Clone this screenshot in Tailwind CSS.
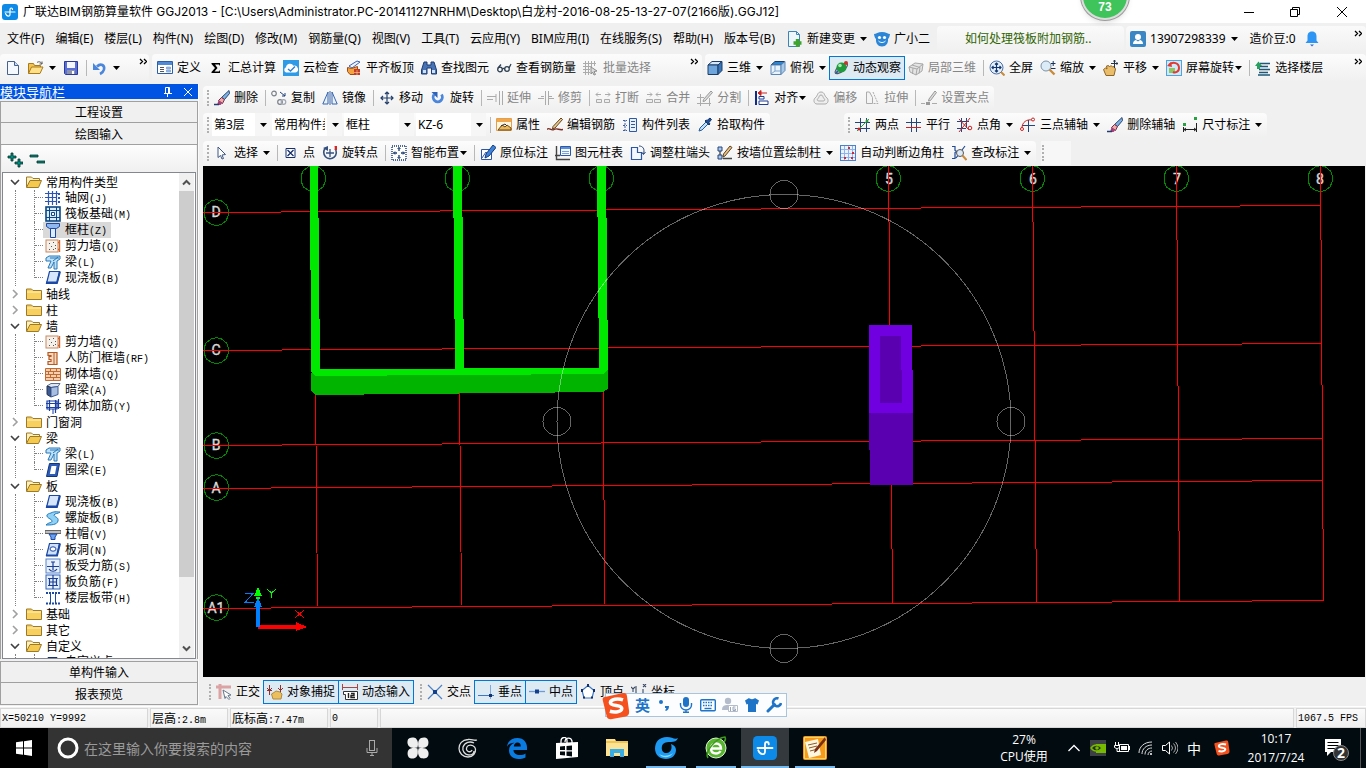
<!DOCTYPE html>
<html lang="zh-CN">
  <head>
    <meta charset="utf-8" />
    <title>广联达BIM钢筋算量软件 GGJ2013</title>
    <script src="https://cdn.jsdelivr.net/npm/@tailwindcss/browser@4"></script>
  </head>
  <body
    class="h-screen flex flex-col overflow-hidden bg-[#f0f0f0] font-['Noto_Sans','Noto_Sans_CJK_SC',sans-serif] text-xs leading-4 text-black whitespace-nowrap"
  >
    <!-- icon sprite, every symbol on a 16x16 grid -->
    <svg class="hidden">
      <symbol id="app" viewBox="0 0 16 16"><rect width="16" height="16" rx="3" fill="#0d8ae8"/><path d="M10.500 5.500C10.500 3.500 8 3.500 8 5.500V10.500C8 13 4.500 12.500 3.500 9.500M3 8H13" fill="none" stroke="#fff" stroke-width="1.200" stroke-linecap="round"/></symbol>
      <symbol id="new" viewBox="0 0 16 16"><path d="M2.500 1.500h7l4 4v9h-11z" fill="#f4f9ff" stroke="#46618c"/><path d="M9.500 1.500v4h4" fill="#c8daf2" stroke="#46618c"/></symbol>
      <symbol id="open" viewBox="0 0 16 16"><path d="M.5 13.500v-10h5l1 2h6v2" fill="#f3c350" stroke="#a97a1a"/><path d="M.5 13.500l3-6.500H15l-3 6.500z" fill="#ffe08a" stroke="#a97a1a"/><path d="M9 2.500c2-1.500 4-.5 5 1.500m0-2.500V4h-2.500" fill="none" stroke="#555"/></symbol>
      <symbol id="save" viewBox="0 0 16 16"><path d="M1.500 1.500h13v13h-12l-1-1z" fill="#5a6fd8" stroke="#2b3a9a"/><path d="M4 2h8v6H4z" fill="#f5f7ff"/><path d="M4 10h8v4H4z" fill="#8d93a8"/><path d="M9 11h2v3H9z" fill="#fff"/></symbol>
      <symbol id="undo" viewBox="0 0 16 16"><path d="M5 6.500c4-4 8-1 7 3-.5 2-2 3.500-4 4.500" fill="none" stroke="#4a86dc" stroke-width="2.600"/><path d="M1 3v7h7z" fill="#4a86dc"/></symbol>
      <symbol id="define" viewBox="0 0 16 16"><path d="M.5 1.500h15v12H.5z" fill="#fff" stroke="#2d5fa8"/><path d="M1 2h14v3H1z" fill="#4f8ad6"/><path d="M3 7.500h4M3 9.500h4M3 11.500h4" stroke="#555"/><path d="M9.500 7h4v2h-4zm0 3h4v2h-4z" fill="#9fbfe8" stroke="#5a86be" stroke-width=".5"/></symbol>
      <symbol id="sigma" viewBox="0 0 16 16"><path d="M3.500 3h8.500v3l-1-1.500H7L9.500 8 6.500 11.500H11l1-1.500v3H3.500v-1L7 8 3.500 4z" fill="#000"/></symbol>
      <symbol id="cloud" viewBox="0 0 16 16"><rect width="16" height="16" fill="#2f9be6"/><path d="M3 12.500a2.800 2.800 0 0 1 0-5.200 4 4 0 0 1 7.500-1.500 3.400 3.400 0 0 1 2 6.700z" fill="#fff"/><path d="M5 9l2.500 2L12 6.500" fill="none" stroke="#2f7fd0" stroke-width="1.400"/></symbol>
      <symbol id="flush" viewBox="0 0 16 16"><path d="M3 6l8-5 3 1-8 6z" fill="#eef3ff" stroke="#3d62b0"/><path d="M1.500 7.500l4 1 6-2v3l-3 1 3 .5v3.500H4l-2.500-3z" fill="#f5a340" stroke="#9c4b16"/><path d="M8 9h6v6H8z" fill="#c43c26"/><path d="M8 12.500h6M11 10v5" stroke="#ffd9a0" stroke-width=".6"/></symbol>
      <symbol id="binoc" viewBox="0 0 16 16"><path d="M3 2h3v3h4V2h3l2.500 8v4h-5V8H6v6H.500v-4z" fill="#4773b4" stroke="#1d3c73"/><path d="M2 10h3v3H2zm9 0h3v3h-3z" fill="#cfe0f7"/></symbol>
      <symbol id="glasses" viewBox="0 0 16 16"><g fill="none" stroke="#2c3e50" stroke-width="1.300"><circle cx="4" cy="9.500" r="2.300"/><circle cx="11" cy="9" r="2.300"/><path d="M6.300 9.500c.6-1.500 1.500-1.500 2.500-.5M2 8l3-3.500M13 8l2-4"/></g></symbol>
      <symbol id="batch" viewBox="0 0 16 16"><path d="M0 3.500h13M0 6.500h9M0 9.500h7M0 12.500h7M2.500 1v14M5.500 1v14M8.500 1v6M11.500 1v5" stroke="#ababab"/><path d="M8 7l6 4-3 .5 1.500 3-1.500.5-1.500-3L8 14z" fill="#ddd" stroke="#8c8c8c"/></symbol>
      <symbol id="cube" viewBox="0 0 16 16"><path d="M1 5l4-3.500h10L11 5z" fill="#d5e8fa" stroke="#1b3c68"/><path d="M1 5h10v9.500H1z" fill="#6ea5dc" stroke="#1b3c68"/><path d="M11 5l4-3.500v9l-4 4z" fill="#3a75b8" stroke="#1b3c68"/></symbol>
      <symbol id="topcube" viewBox="0 0 16 16"><path d="M1 5l4-3.500h10L11 5z" fill="#2e86d1" stroke="#1b3c68"/><path d="M1 5h10v9.500H1z" fill="#e8f3fc" stroke="#5c86b4"/><path d="M11 5l4-3.500v9l-4 4z" fill="#a9c9e8" stroke="#5c86b4"/><path d="M5 11v-6M5 11h6M5 11l-4 3" stroke="#7ea4cc"/></symbol>
      <symbol id="orbit" viewBox="0 0 16 16"><ellipse cx="8" cy="8.500" rx="7.500" ry="3" transform="rotate(-38 8 8)" fill="none" stroke="#4e5a66" stroke-width="1.200"/><circle cx="8.500" cy="7.500" r="5" fill="#1f9a3c"/><circle cx="7" cy="5.500" r="1.800" fill="#a8edb0"/><path d="M2 14l2-4 2 2z" fill="#245d9c"/><circle cx="13" cy="3" r="2" fill="#c8342c"/></symbol>
      <symbol id="local" viewBox="0 0 16 16"><path d="M1 7l6-4 8 1-1 7-6 4-6-3z" fill="#e4e4e4" stroke="#a8a8a8"/><path d="M1 7l8 2 6-5M9 9l-1 6M4 5l8 2.500-1 6M5 8l-.500 6" fill="none" stroke="#a8a8a8"/></symbol>
      <symbol id="full" viewBox="0 0 16 16"><circle cx="7.500" cy="7.500" r="6.500" fill="#e4f0fb" stroke="#4d6fa3"/><path d="M12 12l3.500 3.500" stroke="#c98b3a" stroke-width="2"/><path d="M7.500 3v9M3 7.500h9M6 4.500L7.500 3 9 4.500M6 10.500L7.500 12 9 10.500M4.500 6L3 7.500 4.500 9M10.500 6L12 7.500 10.500 9" fill="none" stroke="#14366e" stroke-width="1.200"/></symbol>
      <symbol id="zoom" viewBox="0 0 16 16"><circle cx="6" cy="6" r="5" fill="#dcebf8" stroke="#7c92a8"/><path d="M9.500 9.500l5 5" stroke="#c98b3a" stroke-width="2.400"/><path d="M11 3.500h4.500M13.200 1v5M11 8.500h4.500" stroke="#16325c"/></symbol>
      <symbol id="pan" viewBox="0 0 16 16"><path d="M3 15.500L.5 9.500l2-1.500 1.500 1-.5-3 2-.5 1 1.500 1.500-1.500 1.500 1.500 1.500-.5 1.500 2.500-1.500 6.500z" fill="#e9bd6a" stroke="#8d6526"/><path d="M11.500 0v8M8 3.500h7M10.500 1.500l1-1.500 1 1.500M13.500 2.500l1.500 1-1.500 1" fill="none" stroke="#26344a"/></symbol>
      <symbol id="screen" viewBox="0 0 16 16"><rect x=".5" y=".5" width="15" height="15" fill="#cfe9fa" stroke="#50a4da"/><path d="M3 8h6v5H3z" fill="#8cc665"/><path d="M3 5c4-4 10-2 10 3 0 4-4 5-6 4" fill="none" stroke="#e23a30" stroke-width="2"/><path d="M1 6l4-4 1 5z" fill="#e23a30"/></symbol>
      <symbol id="floors" viewBox="0 0 16 16"><path d="M5 3.500h10M4 6.500h9M4 9.500h11M4 12.500h9M3 15h12" stroke="#1e5a78" stroke-width="1.500"/><path d="M0 6l3.500-4.500L7 6H5v3H2V6z" fill="#27a060"/></symbol>
      <symbol id="brush" viewBox="0 0 16 16"><path d="M15 0.500l.5 3-5 6-3-2z" fill="#7db0e4" stroke="#2e4a70"/><path d="M7.500 7.500l3 2-2 4-4-3z" fill="#f7a8a8" stroke="#6e2f4c"/><path d="M4.500 10.500l3.500 3-1.500 1.500H3z" fill="#a63c78"/><path d="M0 14.500h5" stroke="#223c70" stroke-width="1.500"/></symbol>
      <symbol id="copy" viewBox="0 0 16 16"><g fill="none" stroke="#7c828c" stroke-width="1.200"><circle cx="3" cy="3.500" r="2.300"/><circle cx="9" cy="12" r="2.300"/><circle cx="12.500" cy="12" r="2.300" stroke="#a0a8b4"/></g><path d="M9 2l5 4M14 3v3h-3" fill="none" stroke="#1e3f7c"/></symbol>
      <symbol id="mirror" viewBox="0 0 16 16"><path d="M6 2v12H.800zM10 2v12h5.200z" fill="#e9f1fb" stroke="#3765ad"/><path d="M8 1v14" stroke="#3765ad"/></symbol>
      <symbol id="move" viewBox="0 0 16 16"><path d="M8 2v12M2 8h12M6 4L8 2l2 2M6 12l2 2 2-2M4 6L2 8l2 2M12 6l2 2-2 2" fill="none" stroke="#22406b" stroke-width="1.200"/></symbol>
      <symbol id="rotate" viewBox="0 0 16 16"><path d="M4 4.500a4.600 4.600 0 1 0 7.500 0" fill="none" stroke="#4a86dc" stroke-width="2.800"/><path d="M1.500 2h6v6z" fill="#2e62b8"/></symbol>
      <symbol id="extend" viewBox="0 0 16 16"><path d="M0 6.500h9M0 9.500h6M12.500 1v14M15.500 1v14M9 4v8" stroke="#ababab"/></symbol>
      <symbol id="trim" viewBox="0 0 16 16"><path d="M0 8.500h6M11 8.500h5M7.500 1v14M10.500 1v14M3 6.500h3M11 6.500h3" stroke="#ababab"/></symbol>
      <symbol id="break" viewBox="0 0 16 16"><path d="M1 4.500h5M10 4.500h5M3 2.500l-2 2 2 2M13 2.500l2 2-2 2" fill="none" stroke="#ababab"/><path d="M1.500 9.500h5v3h-5zM9.500 9.500h5v3h-5z" fill="#eee" stroke="#ababab"/></symbol>
      <symbol id="merge" viewBox="0 0 16 16"><path d="M1 4.500h5M10 4.500h5M4 2.500l2 2-2 2M12 2.500l-2 2 2 2" fill="none" stroke="#ababab"/><path d="M.5 9.500h6v3h-6zM8.500 9.500h6v3h-6z" fill="#eee" stroke="#ababab"/></symbol>
      <symbol id="split" viewBox="0 0 16 16"><path d="M0 7.500h7M0 13.500h14M3.500 4v12M12.500 8v8" stroke="#ababab"/><path d="M14 1l1.500 1.500L8 11l-2 .5.500-2z" fill="#ddd" stroke="#999"/></symbol>
      <symbol id="align" viewBox="0 0 16 16"><path d="M2 1v14" stroke="#102c88" stroke-width="2"/><path d="M5 6.500h5v2.500H5zM5 11h9v3.500H5z" fill="#fff" stroke="#1f3c94"/><path d="M6 3h7M4 3l3-2.500v5z" stroke="#c22" fill="#c22"/></symbol>
      <symbol id="offset" viewBox="0 0 16 16"><path d="M8 2c4 0 3 4 6 6 2 2 1 6-2 6H4c-3 0-4-4-2-6 3-2 2-6 6-6z" fill="#eee" stroke="#ababab"/><path d="M8 5c2 0 1.500 2 3 3.500s.5 2.500-1 2.500H6c-1.500 0-2.500-1-1-2.500S6 5 8 5z" fill="none" stroke="#ababab"/></symbol>
      <symbol id="stretch" viewBox="0 0 16 16"><path d="M2.500 2v11.500h6v-6l-3-5.500z" fill="#f4f4f4" stroke="#ababab"/><path d="M9 2l5 11.500H9" fill="none" stroke="#ababab" stroke-dasharray="2 1"/></symbol>
      <symbol id="grips" viewBox="0 0 16 16"><path d="M0 13.500h4M11 13.500h5" stroke="#ababab"/><path d="M5 12h4v3H5z" fill="#999"/><path d="M14 1l1.500 1.500-6 8-2 .500.500-2z" fill="#ddd" stroke="#999"/></symbol>
      <symbol id="prop" viewBox="0 0 16 16"><path d="M.5 1.500h15v12H.5z" fill="#fff6e0" stroke="#e0a050"/><path d="M1 2h14v3H1z" fill="#f0a64a"/><path d="M2 13l4-5 3 2 2-2 4 3v2z" fill="#e7b95b" stroke="#704814"/><path d="M5 9l4-2 2 2" stroke="#333" fill="none"/></symbol>
      <symbol id="editbar" viewBox="0 0 16 16"><path d="M0 12.500c2-3 4 2 7 0s5 1 9 0" fill="none" stroke="#7a2a20" stroke-width="1.400"/><path d="M14 1l1.500 1.500L8 11l-2.500 1L6 9.500z" fill="#ecc88a" stroke="#5c4322"/></symbol>
      <symbol id="list" viewBox="0 0 16 16"><path d="M1 3.500h4M1 8.500h4M1 13.500h4M3 3v11" stroke="#3b5fa0" stroke-dasharray="2 1"/><path d="M7.500 1.500h7v13h-7z" fill="#e9f1fc" stroke="#2f58a3"/><path d="M9 4.500h4M9 7.500h4M9 10.500h4" stroke="#2f58a3"/></symbol>
      <symbol id="pick" viewBox="0 0 16 16"><path d="M2 14l1-3 6-6 2 2-6 6z" fill="#bfe0fa" stroke="#2a5c98"/><path d="M8 4l4 4 1-1-1-1.500 2.500-3L13 1l-3 2.500L9 3z" fill="#1f4f96" stroke="#16376c"/></symbol>
      <symbol id="twopt" viewBox="0 0 16 16"><path d="M0 5.500h15M0 11.500h15M5.500 1v14M11.500 1v14" stroke="#26467a"/><path d="M2 14L14 2" stroke="#2d9c3a"/><circle cx="4" cy="12" r="1.500" fill="#c22"/><circle cx="12" cy="4" r="1.500" fill="#2d9c3a"/></symbol>
      <symbol id="parallel" viewBox="0 0 16 16"><path d="M0 5.500h15M5.500 1v14M10.500 1v14" stroke="#26467a"/><path d="M0 10.500h15" stroke="#c22"/></symbol>
      <symbol id="ptangle" viewBox="0 0 16 16"><path d="M0 4.500h12M0 11.500h9M4.500 1v14M9.500 1v10" stroke="#26467a"/><path d="M2 15L13 1M2 2l10 11" stroke="#c22"/><circle cx="13" cy="11" r="1.800" fill="#fff" stroke="#c22"/></symbol>
      <symbol id="threept" viewBox="0 0 16 16"><path d="M2 8.500h13M8.500 3v12" stroke="#26467a"/><path d="M2 11c0-6 5-9 10-8" fill="none" stroke="#c22"/><circle cx="2" cy="12" r="1.500" fill="#fff" stroke="#c22"/><circle cx="13" cy="2.500" r="1.500" fill="#fff" stroke="#c22"/></symbol>
      <symbol id="dim" viewBox="0 0 16 16"><path d="M1 6h3v3H1zM12 0h3v3h-3z" fill="#27a243"/><path d="M1.500 10v5M14.500 6v9M2 12.500h12M4 11l-2 1.500L4 14M12 11l2 1.500-2 1.500" fill="none" stroke="#222"/></symbol>
      <symbol id="cursor" viewBox="0 0 16 16"><path d="M4 2l7.500 7.500-3.500.5 1.500 3.500-1.500.5-1.500-3.500L4 12.500z" fill="#fff" stroke="#3e5680"/></symbol>
      <symbol id="point" viewBox="0 0 16 16"><path d="M3 3.500h9v9H3z" fill="#fff" stroke="#17306c"/><path d="M4.500 5l6 6M10.500 5l-6 6" stroke="#17306c" stroke-width="1.300"/></symbol>
      <symbol id="rotpt" viewBox="0 0 16 16"><path d="M3.500 3a6.300 6.300 0 1 0 9.500.5" fill="none" stroke="#34507e" stroke-width="1.600"/><path d="M8 4v8M4 8h8" stroke="#34507e" stroke-width="1.300"/><path d="M1 3l5-2v5z" fill="#34507e"/><path d="M12.500 1h2.500v4h-2z" fill="#d22"/></symbol>
      <symbol id="smart" viewBox="0 0 16 16"><rect x="1" y="1" width="14" height="14" fill="#fff" stroke="#16386c" stroke-width="1.400" stroke-dasharray="1 1"/><path d="M8 2.500V6M8 10v3.500M2.500 8H6M10 8h3.500" stroke="#16386c" stroke-width="1.300"/><path d="M6.500 4L8 2.500 9.500 4M6.500 12L8 13.500 9.500 12M4 6.500L2.500 8 4 9.500M12 6.500L13.500 8 12 9.500" fill="none" stroke="#16386c"/></symbol>
      <symbol id="insitu" viewBox="0 0 16 16"><path d="M1.500 4.500h10v10h-10z" fill="#fff" stroke="#2c57a5"/><path d="M2 13l4-6 2 3" stroke="#2c57a5" fill="none"/><path d="M13 0l3 2.500-7 8.500-4 2 1-4z" fill="#3e83d8" stroke="#153a7c"/></symbol>
      <symbol id="table" viewBox="0 0 16 16"><path d="M5.500 1.500h10v9h-10z" fill="#f3f8ff" stroke="#2c57a5"/><path d="M6 2h9v2H6z" fill="#5a8ed8"/><path d="M7 6.500h7M7 8.500h7" stroke="#7aa0d8"/><path d="M1.500 1v13.500H15M0 10.500h5" fill="none" stroke="#444" stroke-width="1.400"/></symbol>
      <symbol id="adjust" viewBox="0 0 16 16"><path d="M1.500 14.500v-12h6v5h4v7z" fill="#f3f8ff" stroke="#2c57a5" stroke-width="1.200"/><path d="M9 1c4 0 6 3 4.500 8M11.500 7l2 2.500L15.500 7" fill="none" stroke="#26467a"/></symbol>
      <symbol id="wallcol" viewBox="0 0 16 16"><path d="M1 2h4v4H1zM1 10h4v4H1z" fill="#a9c6ee" stroke="#26467a"/><path d="M6 13.500h9M3 6v4" stroke="#444" stroke-width="1.300"/><path d="M13 1l2 1.500-7 8.500-2 1 .500-3z" fill="#e9c184" stroke="#5c4322"/></symbol>
      <symbol id="autocol" viewBox="0 0 16 16"><rect x=".5" y=".5" width="15" height="15" fill="#eaf3ff" stroke="#4c80c8"/><path d="M1 4.500h14M1 8.500h14M1 12.500h14M4.500 1v14M8.500 1v14M12.500 1v14" stroke="#8fb4e8"/><path d="M8 2h2v2H8zM4 12h2v2H4zM11 12h2v2h-2zM12 7h2v2h-2z" fill="#d22a2a"/></symbol>
      <symbol id="check" viewBox="0 0 16 16"><path d="M1 1.500h3v4l2 1-2 1v6H1M14 1L5 13" fill="none" stroke="#204a94" stroke-width="1.200"/><circle cx="9" cy="8" r="3.500" fill="#dce9f6" stroke="#555"/><path d="M11.500 10.500l4 4.500" stroke="#c98b3a" stroke-width="2"/></symbol>
      <symbol id="ortho" viewBox="0 0 16 16"><path d="M0 3h15M4 0v15" stroke="#dba3a3" stroke-width="3"/><path d="M7 6l8 5-3 .500 2 3-1 1-3-3-1 2z" fill="#fff" stroke="#66788a"/></symbol>
      <symbol id="osnap" viewBox="0 0 16 16"><path d="M2.500 1v10M13.500 1v8M0 6.500h5M0 4l2.500 2.500L5 4M11 4l2.500 2.500L16 4" fill="none" stroke="#8c3030"/><path d="M6 15l-1.500-5L7 8.500 9 7l4 1 2 2-1 5z" fill="#ecbf5c" stroke="#b08a3e"/></symbol>
      <symbol id="dyn" viewBox="0 0 16 16"><path d="M.5 0v6M15.500 0v6M1 3.500h14" stroke="#a04848"/><path d="M1.500 7.500h14v8h-12v-5h-2z" fill="#fff" stroke="#333"/><path d="M6.500 9v5M9 9.500h3v2H9v2h4" fill="none" stroke="#222" stroke-width="1.400"/></symbol>
      <symbol id="cross" viewBox="0 0 16 16"><path d="M1 1l14 14M15 1L1 15" stroke="#4b82c8" stroke-width="1.200"/><path d="M6 6h4v4H6z" fill="#12408c"/></symbol>
      <symbol id="perp" viewBox="0 0 16 16"><path d="M0 11.500h16" stroke="#3c78c4"/><path d="M12.500 1v14" stroke="#7da9dc"/><path d="M11 10h3v3h-3z" fill="#12306c"/></symbol>
      <symbol id="mid" viewBox="0 0 16 16"><path d="M0 7.500h16" stroke="#6b9bd8" stroke-width="1.300"/><path d="M6 5.500h4v4H6z" fill="#12408c"/></symbol>
      <symbol id="vertex" viewBox="0 0 16 16"><path d="M8 1.500l6 5-2 7.500H4L2 6.500z" fill="#fff" stroke="#3c78c4" stroke-width="1.200"/><path d="M7 0h2v3H7zM13 5h2v3h-2zM1 5h2v3H1zM3 12.500h2v2H3zM11 12.500h2v2h-2z" fill="#12306c"/></symbol>
      <symbol id="coord" viewBox="0 0 16 16"><path d="M0 3l2 2 2-2M2 5v3M12 0l3 3M15 0l-3 3M5 2v9l7 3V5M5 11l-3 3" fill="none" stroke="#3a4c66" stroke-width="1.100"/></symbol>
      <symbol id="change" viewBox="0 0 16 16"><path d="M1.500.5h8l3 3v12h-11z" fill="#eef6fd" stroke="#3c84b8"/><path d="M9.500.5v3h3" fill="none" stroke="#3c84b8"/><path d="M10.500 8v8M6.500 12h8" stroke="#3da52c" stroke-width="3.400"/></symbol>
      <symbol id="mascot" viewBox="0 0 16 16"><path d="M8 1c4 0 6 2 8 2-.5 3-1 4-2 5 .5 4-2 7.500-6 7.500S1.500 12 2 8C1 7 .5 6 0 3c2 0 4-2 8-2z" fill="#2b86d8"/><circle cx="5.500" cy="6.500" r="1.600" fill="#fff"/><circle cx="10.500" cy="6.500" r="1.600" fill="#fff"/><path d="M4.500 10c2 2 5 2 7 0" fill="none" stroke="#fff"/></symbol>
      <symbol id="user" viewBox="0 0 16 16"><rect width="16" height="16" rx="2" fill="#3b87c4"/><circle cx="8" cy="6" r="3" fill="#fff"/><path d="M3 13c0-3 2-4 3-4l2 1.500L10 9c1 0 3 1 3 4z" fill="#fff"/></symbol>
      <symbol id="bell" viewBox="0 0 16 16"><path d="M8 .5c3.500 0 4.500 2.500 4.500 5v4l2 2.500h-13l2-2.500v-4c0-2.500 1-5 4.500-5z" fill="#2d96f5"/><path d="M6 13.500h4L8 15.500z" fill="#2d6fd0"/></symbol>
      <!-- tree icons -->
      <symbol id="fopen" viewBox="0 0 16 16"><path d="M.5 13V3h5l1.500 1.500h6.500V7" fill="#fdf0bd" stroke="#9c7a2c"/><path d="M.5 13.500L4 6.500h11.500l-3 7z" fill="#f5c84e" stroke="#9c7a2c"/></symbol>
      <symbol id="fclosed" viewBox="0 0 16 16"><path d="M.5 13.500V3h5L7 4.500h8.500v9z" fill="#f7d060" stroke="#9c7a2c"/><path d="M1 6h14" stroke="#fff2bf"/></symbol>
      <symbol id="axis" viewBox="0 0 16 16"><path d="M0 3.500h15M0 7.500h12M0 11.500h12M3.500 1v14M7.500 1v14M11.500 1v14" stroke="#2c56b4" stroke-width="1.200"/><path d="M13 3h2v2h-2zM13 7h2v2h-2zM13 11h2v2h-2z" fill="#2c56b4"/></symbol>
      <symbol id="raft" viewBox="0 0 16 16"><rect x="1" y="1" width="14" height="14" fill="#d7ecff" stroke="#0d4880" stroke-width="1.600"/><path d="M4.500 1v14M11.500 1v14M1 4.500h14M1 11.500h14" stroke="#0d4880"/><path d="M6.500 6.500h3v3h-3z" fill="#fff" stroke="#0d4880"/></symbol>
      <symbol id="column" viewBox="0 0 16 16"><path d="M1.500 1.500h13v3l-3 2h-7l-3-2z" fill="#8fb8f0" stroke="#1b49a4"/><path d="M5.500 6.500h5v9h-5z" fill="#dfecff" stroke="#1b49a4"/></symbol>
      <symbol id="shear" viewBox="0 0 16 16"><rect x="1" y="2" width="12" height="12" fill="#f5f0ea" stroke="#c98a60"/><path d="M4 5h1v1H4zM8 4h1v1H8zM6 8h1v1H6zM10 7h1v1h-1zM4 11h1v1H4zM8 11h1v1H8zM10 10h1v1h-1z" fill="#555"/><path d="M14.500 2v12M13 4.500h2M13 11.500h2" stroke="#d0662c" stroke-width="1.400"/></symbol>
      <symbol id="beam" viewBox="0 0 16 16"><path d="M1 4l3-2h11v3l-3 2v8H9V8l-3 6H3l3-7H1z" fill="#bfe0fa" stroke="#2678b8"/><path d="M5 4l9 0M8 7l5-4" stroke="#2678b8"/></symbol>
      <symbol id="slab" viewBox="0 0 16 16"><path d="M4.500 1.500h10l-2.500 12H1.500z" fill="#d6e6fd" stroke="#1b49a4" stroke-width="1.200"/><path d="M1 12.500h11l3-11" fill="none" stroke="#1b49a4" stroke-width="2"/></symbol>
      <symbol id="door" viewBox="0 0 16 16"><path d="M3 2.500h9v12H3v-3h3v-2H4v-3h2v-1H3z" fill="#f9d9c0" stroke="#b55a24" stroke-width="1.200"/><path d="M9 3v11" stroke="#b55a24"/></symbol>
      <symbol id="brick" viewBox="0 0 16 16"><path d="M.5 2.500h15v12H.5z" fill="#f7cfae" stroke="#c06a34"/><path d="M1 5.500h14M1 8.500h14M1 11.500h14M5.500 3v3M11.500 3v3M8.500 6v3M3.500 6v3M5.500 9v3M11.500 9v3M8.500 12v3" stroke="#c06a34"/></symbol>
      <symbol id="hbeam" viewBox="0 0 16 16"><path d="M2 4l4-2.500h9L13 4.500l-7 1z" fill="#dfe7f2" stroke="#5a6b88"/><path d="M2 4l4 1.500V15l-4-2.500z" fill="#3c5a94" stroke="#23334f"/><path d="M6 5.500l7-1v8L6 15z" fill="#a9bfe2" stroke="#3c5a94"/></symbol>
      <symbol id="masonry" viewBox="0 0 16 16"><path d="M1 5.500h15M1 9.500h15M4.500 2v11M10.500 2v13M13.500 1v10M2 3h10v8H2z" fill="none" stroke="#1b3fa4" stroke-width="1.200"/><path d="M8 11v5" stroke="#1b3fa4"/></symbol>
      <symbol id="ring" viewBox="0 0 16 16"><path d="M4.500 1.500h10l-2.500 13H1.500z" fill="#2c5cb8" stroke="#12357c"/><path d="M6.500 4h5l-1.500 8H4.800z" fill="#fff"/></symbol>
      <symbol id="spiral" viewBox="0 0 16 16"><path d="M6 3c3-2 8-1 9-1-2 2-5 1-6 3 0 2 5 2 4 6-1 4-7 4-12 4 3-3 6-2 6-4S1 8 2 5c.5-1 2-1.500 4-2z" fill="#8fd0f5" stroke="#1f7abd"/></symbol>
      <symbol id="cap" viewBox="0 0 16 16"><path d="M0 4.500h16v3H0z" fill="#bdbdbd" stroke="#666"/><path d="M4 8h8l-2 3v2.500H6V11z" fill="#6aa2f0" stroke="#1b49a4"/></symbol>
      <symbol id="hole" viewBox="0 0 16 16"><path d="M4.500 1.500h10l-2.500 12H1.500z" fill="#cfe2fb" stroke="#1b49a4" stroke-width="1.200"/><ellipse cx="8" cy="7" rx="3" ry="2.200" fill="#fff" stroke="#1b49a4"/><path d="M1 13.500h11l3-12" fill="none" stroke="#1b49a4" stroke-width="2"/></symbol>
      <symbol id="rebar" viewBox="0 0 16 16"><rect x="1" y="1" width="14" height="14" fill="#e6effd" stroke="#5b85c8"/><path d="M2 8.500h12M8 4v8M6 4h4M4 11c2 3 6 3 8 0" fill="none" stroke="#1b3f94" stroke-width="1.200"/></symbol>
      <symbol id="neg" viewBox="0 0 16 16"><rect x="1" y="1" width="14" height="14" fill="#e6effd" stroke="#2f62b8"/><path d="M3 4.500h10M3 11.500h10M4 8h8M4.500 4v8M11.500 4v8M8 1v14" stroke="#1b3f94" stroke-width="1.200"/></symbol>
      <symbol id="strip" viewBox="0 0 16 16"><path d="M1 3h14M1 13.500h14" stroke="#1b49a4" stroke-width="2" stroke-dasharray="2 1"/><path d="M5.500 4v9M10.500 4v9" stroke="#1b49a4"/></symbol>
      <symbol id="sogou" viewBox="0 0 16 16"><path d="M1 3l11-2.500c2 0 2 .500 2.300 2L15.500 11c0 2-.5 2.500-2 3L5 15.500c-1.500 0-2-.5-2.400-2L.500 5C.300 4 .3 3.300 1 3z" fill="#f4511e"/><path d="M12 4.500C9 3.500 5 4 4.800 6c0 2.500 6.700 1 6.500 3.500-.2 2-4 2.300-6.800 1.500" fill="none" stroke="#fff" stroke-width="2"/></symbol>
      <!-- axis bubble -->
      <symbol id="bubble" viewBox="0 0 27 27"><path d="M13.500.5l5 1.500 5 4 2 5v5l-2.500 6-5 3.500-4.500 1-5-1-5-3.500-2.500-6v-5l2-5 5-4z" fill="none" stroke="#008a00"/></symbol>
    </svg>

    <header class="relative flex h-[23px] shrink-0 items-center bg-white">
      <svg class="ml-0.5 size-4"><use href="#app" /></svg>
      <h1 class="ml-[5px] font-['Inter','Noto_Sans_CJK_SC',sans-serif]">广联达BIM钢筋算量软件 GGJ2013 - [C:\Users\Administrator.PC-20141127NRHM\Desktop\白龙村-2016-08-25-13-27-07(2166版).GGJ12]</h1>
      <div class="ml-auto flex h-full">
        <button aria-label="最小化" class="flex w-[46px] items-center justify-center"><svg class="size-3" fill="none" stroke="#000"><path d="M1 6.500h10" /></svg></button>
        <button aria-label="还原" class="flex w-[46px] items-center justify-center"><svg class="size-3" fill="none" stroke="#000"><path d="M1.500 3.500h7v7h-7zM3.500 3.500v-2h7v7h-2" /></svg></button>
        <button aria-label="关闭" class="flex w-12 items-center justify-center"><svg class="size-3" fill="none" stroke="#000"><path d="M1 1l10 10M11 1L1 11" /></svg></button>
      </div>
      <div class="absolute right-[237px] -top-7 z-10 flex size-12 items-end justify-center rounded-full border-2 border-[#dcdcdc] bg-[#3fc45c] pb-[3px] shadow-md ring-1 ring-[#9a9a9a]">
        <span class="font-['Liberation_Sans'] text-xs font-bold text-white">73</span>
      </div>
    </header>

    <div class="flex h-[31px] shrink-0 items-center">
      <nav id="menu" class="flex gap-[11px] pl-[7px]"></nav>
      <div data-bar="change" class="ml-3"></div>
      <div class="ml-[7px] flex h-[26px] w-[187px] items-center rounded-sm bg-linear-to-b from-[#fafafa] to-[#f0f0f0] pl-7">
        <a href="#" class="text-[#2f6400]">如何处理筏板附加钢筋..</a>
      </div>
      <div class="ml-0.5 flex h-[26px] flex-1 items-center gap-3 rounded-sm bg-linear-to-b from-[#fafafa] to-[#f0f0f0] pl-1">
        <div data-bar="account"></div>
        <span>造价豆:0</span>
        <button aria-label="消息" class="-ml-1"><svg class="block size-4"><use href="#bell" /></svg></button>
        <button aria-label="更多" class="ml-auto mr-1 flex self-start"><svg class="mt-1 h-2 w-2" fill="none" stroke="#000" stroke-width="1.300"><path d="M1 1l2.500 2.500L1 6M5 1l2.500 2.500L5 6" /></svg></button>
      </div>
    </div>

    <div class="flex h-[30px] shrink-0 gap-[3px] pb-0.5">
      <div class="flex w-[149px] items-center rounded-sm bg-linear-to-b from-[#fcfcfc] to-[#f0f0f0] pl-[5px]">
        <div data-bar="file"></div>
        <button aria-label="更多" class="ml-auto mr-0.5 flex self-start"><svg class="mt-1 h-2 w-2" fill="none" stroke="#000" stroke-width="1.300"><path d="M1 1l2.500 2.500L1 6M5 1l2.500 2.500L5 6" /></svg></button>
      </div>
      <div class="flex w-[550px] items-center rounded-sm bg-linear-to-b from-[#fcfcfc] to-[#f0f0f0] pl-[5px]">
        <div data-bar="calc"></div>
        <button aria-label="更多" class="ml-auto mr-1 flex self-start"><svg class="mt-1 h-2 w-2" fill="none" stroke="#000" stroke-width="1.300"><path d="M1 1l2.500 2.500L1 6M5 1l2.500 2.500L5 6" /></svg></button>
      </div>
      <div class="flex flex-1 items-center rounded-sm bg-linear-to-b from-[#fcfcfc] to-[#f0f0f0] pl-0.5">
        <div data-bar="view"></div>
        <button aria-label="更多" class="ml-auto mr-1 flex self-start"><svg class="mt-1 h-2 w-2" fill="none" stroke="#000" stroke-width="1.300"><path d="M1 1l2.500 2.500L1 6M5 1l2.500 2.500L5 6" /></svg></button>
      </div>
    </div>

    <main class="flex min-h-0 flex-1">
      <aside class="mr-1 flex w-[199px] shrink-0 flex-col border-r border-[#fafafa] font-['Noto_Sans_CJK_SC',sans-serif]">
        <div class="flex h-[15px] items-center bg-[#0054e3] text-white">
          <h2 class="text-[13px] leading-[15px]">模块导航栏</h2>
          <button aria-label="固定" class="ml-auto"><svg class="block h-3 w-3" fill="none" stroke="#fff"><path d="M3.500 7V1.500h4V7M6.500 1v6M2 7.500h8M5.500 8v3" /></svg></button>
          <button aria-label="关闭" class="mr-1 ml-2"><svg class="block h-3 w-3" fill="none" stroke="#fff"><path d="M2 2l8 8M10 2l-8 8" /></svg></button>
        </div>
        <button class="mt-0.5 h-[22px] border border-[#a0a0a0]">工程设置</button>
        <button class="h-[22px] border border-t-0 border-[#a0a0a0]">绘图输入</button>
        <div class="flex min-h-0 flex-1 flex-col border-x border-[#a0a0a0] px-px">
          <div class="flex h-[27px] items-center gap-1.5 bg-linear-to-b from-[#fdfdfd] to-[#f0f0f0] pt-0.5 pl-[5px]">
            <button aria-label="全部展开"><svg class="block h-4 w-4"><path d="M4 1h2v3h3v2H6v3H4V6H1V4h3zM11 7h2v3h3v2h-3v3h-2v-3H8v-2h3z" fill="#00897a" stroke="#06352f" stroke-width=".8" /></svg></button>
            <button aria-label="全部折叠"><svg class="block h-4 w-4"><path d="M1 3h8v2H1zM8 9h8v2H8z" fill="#00897a" stroke="#06352f" stroke-width=".8" /></svg></button>
          </div>
          <div class="flex min-h-0 flex-1 border border-[#828790] bg-white">
            <ul id="tree" class="min-w-0 flex-1 overflow-hidden pt-px"></ul>
            <div class="mr-px flex w-[15px] flex-col items-center bg-[#f0f0f0]">
              <svg class="h-[18px] w-[15px] shrink-0" fill="none" stroke="#505050" stroke-width="2"><path d="M4 11.500l3.500-3.500 3.500 3.500" /></svg>
              <div class="h-[386px] w-full bg-[#cdcdcd]"></div>
              <svg class="mt-auto h-[18px] w-[15px] shrink-0" fill="none" stroke="#505050" stroke-width="2"><path d="M4 6.500l3.500 3.500 3.500-3.500" /></svg>
            </div>
          </div>
        </div>
        <button class="mt-0.5 h-[22px] border border-[#a0a0a0]">单构件输入</button>
        <button class="mb-px h-[22px] border border-t-0 border-[#a0a0a0]">报表预览</button>
      </aside>

      <section class="flex min-w-0 flex-1 flex-col">
        <div class="flex h-[27px] shrink-0 items-center">
          <div data-bar="edit" data-grip class="rounded-sm bg-linear-to-b from-[#fcfcfc] to-[#f0f0f0] pr-[5px]"></div>
        </div>
        <div class="flex h-[27px] shrink-0 items-center">
          <div class="flex items-center rounded-sm bg-linear-to-b from-[#fcfcfc] to-[#f0f0f0] pr-[5px]">
            <span class="ml-1 h-4 border-l-2 border-dotted border-[#b0b0b0]"></span>
            <div id="combos" class="flex gap-0.5 pl-[3px]"></div>
            <span class="mx-1 h-4 w-px bg-[#b8b8b8]"></span>
            <div data-bar="member" class="ml-px"></div>
          </div>
          <div data-bar="axis" data-grip class="ml-[74px] rounded-sm bg-linear-to-b from-[#fcfcfc] to-[#f0f0f0] pr-[5px]"></div>
        </div>
        <div class="flex h-7 shrink-0 items-center pt-px">
          <div data-bar="draw" data-grip class="rounded-sm bg-linear-to-b from-[#fcfcfc] to-[#f0f0f0] pr-[5px]"></div>
          <div class="ml-[5px] flex h-6 w-[30px] items-center bg-[#f7f7f7]"><span class="ml-px h-4 border-l-2 border-dotted border-[#b0b0b0]"></span></div>
        </div>

        <!-- model view -->
        <div class="mr-px min-h-0 flex-1 bg-black">
          <svg class="block h-full w-full" font-family="Roboto, sans-serif" font-size="14">
            <g transform="translate(-203 -166)" shape-rendering="crispEdges">
              <g>
                <use href="#bubble" x="203" y="199" width="27" height="27" /><use href="#bubble" x="203" y="337" width="27" height="27" /><use href="#bubble" x="203" y="432" width="27" height="27" /><use href="#bubble" x="203" y="474" width="27" height="27" /><use href="#bubble" x="203" y="594" width="27" height="27" />
                <use href="#bubble" x="300" y="165" width="27" height="27" /><use href="#bubble" x="444" y="165" width="27" height="27" /><use href="#bubble" x="588" y="165" width="27" height="27" />
                <use href="#bubble" x="875" y="165" width="27" height="27" /><use href="#bubble" x="1019" y="165" width="27" height="27" /><use href="#bubble" x="1163" y="165" width="27" height="27" /><use href="#bubble" x="1307" y="165" width="27" height="27" />
              </g>
              <g fill="#d8d8d8" stroke="#d8d8d8" stroke-width=".4" text-anchor="middle">
                <text x="216" y="217">D</text><text x="216" y="355">C</text><text x="216" y="450">B</text><text x="216" y="493">A</text><text x="216" y="613">A1</text>
                <text x="889" y="184">5</text><text x="1033" y="184">6</text><text x="1177" y="184">7</text><text x="1320" y="184">8</text>
              </g>
              <path fill="none" stroke="#f00" d="M203 212.500L1321 205.500M203 350.500L1322 343.500M203 445.500L1322 438.500M203 488.500L1323 480.500M203 608.500L1324 600.500M315.500 390L317.500 606M459.500 390L461.500 605M603.500 390L604.500 604M888.500 166L892.500 603M1032.500 166L1036.500 602M1176.500 166L1179.500 601M1320.500 166L1323.500 600" />
              <path fill="#00b400" d="M311 373L608 370V389L603 392 316 395 311 391z" />
              <path fill="#00e800" d="M310 166h8l2 203h135l-2-203h9l2 202h135l-2-203h9l2 205-5 4-287 2-5-4z" />
              <path fill="#7000e0" d="M869 325h43l1 88h-44z" />
              <path fill="#5a00b0" d="M880 336h21l1 67h-22zM869 413h44v72h-43z" />
              <g fill="none" stroke="#fff" stroke-opacity=".4">
                <circle cx="784" cy="421.500" r="227" /><circle cx="784" cy="194.500" r="14" /><circle cx="784" cy="648.500" r="14" /><circle cx="557" cy="421.500" r="14" /><circle cx="1011" cy="421.500" r="14" />
              </g>
              <path fill="#f00" d="M258 625h38v-3l11 5-11 4v-2h-38z" />
              <path fill="#0080ff" d="M256 627v-20h-2l4-10 4 10h-2v20z" />
              <path fill="#0f0" d="M254 596l4-9 4 9zM256 597h4v2h-4z" />
              <path fill="none" stroke="#0080ff" d="M245 593.500h8l-8 9h9" />
              <path fill="none" stroke="#0f0" d="M267 589l4.500 4 4.500-4M271.500 593v5" />
              <path fill="none" stroke="#f00" d="M295 610l9 8M304 610l-9 8" />
            </g>
          </svg>
        </div>

        <div class="relative flex h-[29px] shrink-0 items-center">
          <div data-bar="mode" data-grip class="pl-0.5"></div>
          <div data-bar="snap" data-grip class="ml-1.5 pr-[5px]"></div>
          <div class="absolute top-4 left-[402px] z-10 flex h-6 w-[182px] items-center justify-between border border-[#a9c4de] bg-[#fbfdff] pr-1 pl-[29px] text-[#1f74c8]">
            <svg class="absolute -top-0.5 -left-1 size-7"><use href="#sogou" /></svg>
            <span class="font-['Noto_Sans_CJK_SC'] text-[15px] font-bold">英</span>
            <svg class="size-4" fill="currentColor"><circle cx="5" cy="5" r="2" /><path d="M9 9h4c0 3-1 4-3 5l-1-1c1-.5 1.500-1 1-2H9z" /></svg>
            <svg class="size-4" fill="currentColor"><rect x="5" width="6" height="10" rx="3" /><path d="M2.500 6v2a5.500 5 0 0 0 11 0V6M8 13v3M5 15.300h6" fill="none" stroke="currentColor" stroke-width="1.400" /></svg>
            <svg class="size-4" fill="none" stroke="currentColor"><rect x=".7" y="2.700" width="14.600" height="11" rx="1" stroke-width="1.400" /><path d="M3 5.500h10M3 8.500h10" stroke-width="1.600" stroke-dasharray="1.500 1" /><path d="M4.500 11.500h7" stroke-width="1.400" /></svg>
            <svg class="size-4" fill="#b4bccb"><circle cx="6" cy="4" r="3.200" /><path d="M0 13c0-4 2-5 6-5s5 2 5 5z" /><path d="M6.500 8.500h9v6h-9z" fill="#fff" stroke="#b4bccb" /><path d="M8.500 10v4M13.500 10h-2.500v3.500h2.500v-1.500h-2" fill="none" stroke="#9aa5b8" /></svg>
            <svg class="size-4" fill="currentColor"><path d="M5 1c1 1.500 5 1.500 6 0l4 2.500-1.500 4L12 7v8H4V7l-1.500.5L1 3.500z" /></svg>
            <svg class="size-4" fill="none" stroke="currentColor"><path d="M2 14l6.500-6.500" stroke-width="3" stroke-linecap="round" /><path d="M12.500 1.500a4 4 0 1 0 2.500 4.500" stroke-width="2.600" /></svg>
          </div>
        </div>
      </section>
    </main>

    <footer class="flex h-[22px] shrink-0 gap-0.5 border-t border-white pt-px font-['Noto_Sans_CJK_SC'] *:border *:border-[#d7d7d7] *:bg-linear-to-b *:from-[#fafafa] *:to-[#f0f0f0] *:pl-px">
      <div class="w-[148px] font-['Liberation_Mono'] text-[10px] leading-[19px]">X=50210 Y=9992</div>
      <div class="w-[78px] leading-[18px]">层高<span class="font-['Liberation_Mono'] text-[10px]">:2.8m</span></div>
      <div class="w-[98px] leading-[18px]">底标高<span class="font-['Liberation_Mono'] text-[10px]">:7.47m</span></div>
      <div class="w-12 font-['Liberation_Mono'] text-[10px] leading-[19px]">0</div>
      <div class="flex-1"></div>
      <div class="w-[70px] font-['Liberation_Mono'] text-[10px] leading-[19px]">1067.5 FPS</div>
    </footer>

    <div class="flex h-10 shrink-0 items-center bg-[#020b10] font-['Open_Sans','Noto_Sans_CJK_SC',sans-serif] text-white">
      <button aria-label="开始" class="flex h-full w-12 items-center justify-center bg-black"><svg class="size-4" fill="#fff"><path d="M0 2.300l7-1v6.200H0zM8 1.200L16 0v7.500H8zM0 8.500h7v6.200l-7-1zM8 8.500h8V16l-8-1.200z" /></svg></button>
      <div class="flex h-full w-[344px] items-center bg-[#333] pr-3.5 pl-[9px]">
        <svg class="size-[22px] shrink-0" fill="none" stroke="#fff" stroke-width="3"><circle cx="11" cy="11" r="9" /></svg>
        <input aria-label="搜索" placeholder="在这里输入你要搜索的内容" class="ml-[5px] min-w-0 flex-1 font-['Noto_Sans_CJK_SC'] text-sm placeholder-[#9a9a9a]" />
        <svg class="h-4 w-3 shrink-0" fill="none" stroke="#aaa"><rect x="3.500" y=".5" width="5" height="10" /><path d="M1 8v4.500h10V8M6 13v3M4 15.500h4" /></svg>
      </div>
      <div class="ml-0.5 flex h-full w-[445px] justify-between *:relative *:flex *:w-12 *:items-center *:justify-center">
        <button aria-label="应用"><svg class="size-[22px]" viewBox="0 0 22 22" fill="#eee"><path d="M10.500 10.500C3 12 0 9 .5 4 1 0 7 0 9 1.500c2 2 2.500 5 1.500 9z" /><path d="M11.500 10.500C10 3 13 0 18 .5c4 .5 4 6.500 2.500 8.500-2 2-5 2.500-9 1.500z" /><path d="M11.500 11.500c7.500-1.500 10.500 1.500 10 6.500-.5 4-6.500 4-8.500 2.500-2-2-2.500-5-1.500-9z" /><path d="M10.500 11.500c1.500 7.500-1.500 10.500-6.500 10C0 21 0 15 1.500 13c2-2 5-2.500 9-1.500z" /></svg></button>
        <button aria-label="浏览器"><svg class="size-5" viewBox="0 0 20 20" fill="none" stroke="#ddd" stroke-width="1.300"><path d="M19 2c-3 1-5-1-9-.5C4 2 1 6 1 10.500S5 19 10 19c5 0 8-4 7.500-8-.5-3-4-4.500-7-3.500-2 1-3 4-1 5.500s4 .5 4.500-1M16 5c-4-2-9-1-11 4-1 4 2 8 6 8 3 0 5-2 5-4" /></svg></button>
        <button aria-label="Edge"><svg class="size-[22px]" viewBox="0 0 22 22"><path d="M1 10C1.500 4 6 1 11.500 1 18 1 21 6 21 10v3H7.500c0 3.500 3 5 6 5 2.500 0 4.500-.7 6-1.600v4C17 21.500 15 22 12.500 22 6.500 22 3 18 3 13.500c0-4 2-6.500 5.500-7.800C4.500 5.500 2 7.500 1 10zM7.800 9.500h7c0-2.500-1-4-3.300-4S8 7.500 7.800 9.500z" fill="#0a7be0" /></svg></button>
        <button aria-label="应用商店"><svg class="size-[22px]" viewBox="0 0 22 22"><path d="M0 6l22-1v15l-22 2z" fill="#fff" /><path d="M5 6V4c0-4 5-5 6-1v3M9 5c0-5 6-5 7-1v2" fill="none" stroke="#fff" stroke-width="1.300" /><path d="M4 9.500l5-.4v4H4zM10.500 9l5.500-.5v4.700h-5.500zM4 14.500h5v4l-5-.4zM10.500 14.500H16v5l-5.500-.7z" fill="#020b10" /></svg></button>
        <button aria-label="文件资源管理器"><svg class="size-[22px]" viewBox="0 0 22 22"><path d="M0 2h9l1 2h12v15H0z" fill="#fce294" /><path d="M0 4h22v2H0z" fill="#f2c34e" /><path d="M4 12h14v8h-4v-4H8v4H4z" fill="#39ade3" /></svg></button>
        <button aria-label="G浏览器"><svg class="size-6" viewBox="0 0 24 24"><path d="M24 2c-3 2-6-1-11-1C5 1 1 6 1 12.500 1 19 6 23 12 23c6 0 10-4 10-9 0-3-2-5-5-6 1 3 1 8-4 9-4 .5-6-3-5-7 1-4 6-4 9-4s6-1 7-4z" fill="#1e9af2" /><path d="M5 18c3 4 10 5 14-1-4 3-9 4-14 1z" fill="#8ddcff" /></svg><span class="absolute bottom-0 left-1 h-0.5 w-10 bg-[#76b9ed]"></span></button>
        <button aria-label="360浏览器"><svg class="size-6" viewBox="0 0 24 24"><circle cx="12" cy="12" r="10" fill="#58b52f" stroke="#dff5d3" /><path d="M7 12.500h10c0-3-2-5-5-5s-5 2-5 5 2 5 5 5c2 0 3.500-.7 4.500-2.500" fill="none" stroke="#fff" stroke-width="2.400" /><path d="M4 22C0 16 12 2 21 1c1 2 0 4-1 5" fill="none" stroke="#3c9a1c" stroke-width="1.500" /></svg><span class="absolute bottom-0 left-1 h-0.5 w-10 bg-[#76b9ed]"></span></button>
        <button aria-label="GGJ2013" class="bg-[#33393d]"><svg class="size-6"><use href="#app" /></svg><span class="absolute bottom-0 left-0 h-0.5 w-12 bg-[#76b9ed]"></span></button>
        <button aria-label="记事本"><svg class="size-6" viewBox="0 0 24 24"><rect width="24" height="24" rx="2" fill="#f59a1a" /><rect x="1.500" y="1.500" width="21" height="21" fill="none" stroke="#ffd36b" /><path d="M2 6l13-3 3 16-12 3z" fill="#fff6e0" /><path d="M5 9l9-2M6 12l8-2M7 15l8-2" stroke="#8a5a2a" /><path d="M22 1L12 13l-1 4 3-2L23 4z" fill="#7a2f14" /></svg><span class="absolute bottom-0 left-1 h-0.5 w-10 bg-[#76b9ed]"></span></button>
      </div>
      <div class="ml-auto w-[76px] text-center leading-[17px]">27%<br />CPU使用</div>
      <div class="flex items-center *:flex *:w-6 *:justify-center">
        <button aria-label="显示隐藏的图标"><svg class="h-4 w-3" fill="none" stroke="#fff" stroke-width="1.300"><path d="M.5 11L6 5.500l5.500 5.500" /></svg></button>
        <span><svg class="size-4"><rect width="16" height="16" fill="#3c4046" /><path d="M6 4h10v9H6z" fill="#76b900" /><path d="M1 8c3-4 8-4 11 0-3 4-8 4-11 0z" fill="#22300c" stroke="#76b900" stroke-width="1.300" /><circle cx="7" cy="8" r="1.800" fill="#76b900" /></svg></span>
        <span><svg class="size-4" fill="none" stroke="#fff"><path d="M5.500 4.500h9v7h-9zM15.500 6v4M1.500 2v3M4.500 2v3M.5 5.500h5v2l-2 1h-1l-2-1zM3 8v3.500h3" /><path d="M7 6h6v4H7z" fill="#fff" stroke="none" /></svg></span>
        <span><svg class="size-4" fill="none" stroke="#ddd"><path d="M1 13C1 7 6 2 14 2M4 14c0-5 4-9 10-9M7 14.500c0-4 3-6.500 7-6.500M10 15c0-2.500 2-4 4-4" /><circle cx="13" cy="14" r="1" fill="#fff" stroke="none" /></svg></span>
        <span><svg class="size-4" fill="none" stroke="#fff"><path d="M.5 5.500h3l4-3.500v12l-4-3.500h-3z" /><path d="M9.500 5.500q2 2.500 0 5M11.500 3.500q4 4.500 0 9M13.500 2q5 6 0 12" stroke="#aaa" /></svg></span>
        <span class="font-['Noto_Sans_CJK_SC'] text-sm">中</span>
      </div>
      <svg class="mx-2 size-4"><use href="#sogou" /></svg>
      <div class="w-[76px] text-center leading-[19px]">10:17<br />2017/7/24</div>
      <button aria-label="通知" class="flex w-11 justify-center"><svg class="size-7" viewBox="0 0 28 28"><path d="M3 5h16v13H9l-4 4v-4H3z" fill="#fff" /><path d="M5.500 8.500h11M5.500 11.500h11M5.500 14.500h8" stroke="#000" /><circle cx="19" cy="19" r="7.500" fill="#333" stroke="#888" /><text x="19" y="24" text-anchor="middle" font-size="14" font-weight="bold" fill="#fff" font-family="Open Sans">2</text></svg></button>
      <div class="ml-0.5 h-full w-1.5 border-l border-[#555]"></div>
    </div>

    <script>
      const icon = (id) => `<svg class="size-4 shrink-0"><use href="#${id}" /></svg>`;
      const arrow = `<svg class="h-1 w-2 shrink-0"><path d="M1 0h7L4.500 4z" /></svg>`;
      const tightArrow = `<svg class="-ml-1 h-1 w-2 shrink-0"><path d="M1 0h7L4.500 4z" /></svg>`;
      const separator = `<span class="-mr-0.5 h-4 w-px shrink-0 bg-[#b8b8b8]"></span>`;
      const grip = `<span class="mr-[5px] ml-1 h-4 w-0 border-l-2 border-dotted border-[#b0b0b0]"></span>`;

      // [icon, label, flags]: v = drop-down arrow, vt = arrow close to the label, x = disabled, on = pressed
      const bars = {
        change: [["change", "新建变更", "v"], ["mascot", "广小二"]],
        account: [["user", "13907298339", "v"]],
        file: [["new", ""], ["open", "", "v"], ["save", ""], "|", ["undo", "", "v"]],
        calc: [["define", "定义"], ["sigma", "汇总计算"], ["cloud", "云检查"], ["flush", "平齐板顶"], ["binoc", "查找图元"], ["glasses", "查看钢筋量"], ["batch", "批量选择", "x"]],
        view: [["cube", "三维", "v"], ["topcube", "俯视", "v"], ["orbit", "动态观察", "on"], ["local", "局部三维", "x"], "|", ["full", "全屏"], ["zoom", "缩放", "v"], ["pan", "平移", "v"], ["screen", "屏幕旋转", "vt"], "|", ["floors", "选择楼层"]],
        edit: [["brush", "删除"], "|", ["copy", "复制"], ["mirror", "镜像"], "|", ["move", "移动"], ["rotate", "旋转"], "|", ["extend", "延伸", "x"], ["trim", "修剪", "x"], "|", ["break", "打断", "x"], ["merge", "合并", "x"], ["split", "分割", "x"], "|", ["align", "对齐", "vt"], ["offset", "偏移", "x"], ["stretch", "拉伸", "x"], "|", ["grips", "设置夹点", "x"]],
        member: [["prop", "属性"], ["editbar", "编辑钢筋"], ["list", "构件列表"], ["pick", "拾取构件"]],
        axis: [["twopt", "两点"], ["parallel", "平行"], ["ptangle", "点角", "v"], ["threept", "三点辅轴", "v"], ["brush", "删除辅轴"], ["dim", "尺寸标注", "v"]],
        draw: [["cursor", "选择", "v"], "|", ["point", "点"], ["rotpt", "旋转点"], "|", ["smart", "智能布置", "vt"], "|", ["insitu", "原位标注"], ["table", "图元柱表"], ["adjust", "调整柱端头"], ["wallcol", "按墙位置绘制柱", "v"], ["autocol", "自动判断边角柱"], ["check", "查改标注", "v"]],
        mode: [["ortho", "正交"], ["osnap", "对象捕捉", "on"], ["dyn", "动态输入", "on"]],
        snap: [["cross", "交点"], ["perp", "垂点", "on"], ["mid", "中点", "on"], ["vertex", "顶点"], ["coord", "坐标"]],
      };

      function renderTool(tool) {
        if (tool === "|") return separator;
        const [id, label, flag] = tool;
        let look = "flex h-6 items-center gap-1";
        let tail = "";
        if (flag === "x") look += " text-[#858585]";
        if (flag === "on") look += " -mx-1 border border-[#0078d7] bg-[#dde9f3] px-[3px]";
        if (flag === "v") tail = arrow;
        if (flag === "vt") tail = tightArrow;
        return `<button class="${look}" ${flag === "x" ? "disabled" : ""} aria-label="${label || id}">
          ${icon(id)}${label ? `<span>${label}</span>` : ""}${tail}</button>`;
      }

      for (const bar of document.querySelectorAll("[data-bar]")) {
        bar.classList.add("flex", "items-center");
        const start = "grip" in bar.dataset ? grip : "";
        bar.innerHTML = start + `<div class="flex items-center gap-[7px]">${bars[bar.dataset.bar].map(renderTool).join("")}</div>`;
      }

      document.getElementById("menu").innerHTML = [
        "文件(F)", "编辑(E)", "楼层(L)", "构件(N)", "绘图(D)", "修改(M)", "钢筋量(Q)", "视图(V)",
        "工具(T)", "云应用(Y)", "BIM应用(I)", "在线服务(S)", "帮助(H)", "版本号(B)",
      ].map((item) => `<button>${item}</button>`).join("");

      document.getElementById("combos").innerHTML = [
        ["楼层", "第3层", "w-[58px]"],
        ["构件分类", "常用构件类型", "w-[70px]"],
        ["构件类型", "框柱", "w-[70px]"],
        ["构件", "KZ-6", "w-[70px]"],
      ].map(([name, value, width]) => `
        <div class="relative flex h-[23px] items-center ${width}">
          <select aria-label="${name}" class="h-full w-full appearance-none overflow-hidden bg-white pr-[17px] pl-0.5"><option>${value}</option></select>
          <span class="pointer-events-none absolute right-0 flex h-full w-[15px] items-center justify-center bg-[#f6f6f6]">${arrow}</span>
        </div>`).join("");

      // [label, expanded, children]
      const groups = [
        ["常用构件类型", true, [["axis", "轴网", "(J)"], ["raft", "筏板基础", "(M)"], ["column", "框柱", "(Z)"], ["shear", "剪力墙", "(Q)"], ["beam", "梁", "(L)"], ["slab", "现浇板", "(B)"]]],
        ["轴线", false, []],
        ["柱", false, []],
        ["墙", true, [["shear", "剪力墙", "(Q)"], ["door", "人防门框墙", "(RF)"], ["brick", "砌体墙", "(Q)"], ["hbeam", "暗梁", "(A)"], ["masonry", "砌体加筋", "(Y)"]]],
        ["门窗洞", false, []],
        ["梁", true, [["beam", "梁", "(L)"], ["ring", "圈梁", "(E)"]]],
        ["板", true, [["slab", "现浇板", "(B)"], ["spiral", "螺旋板", "(B)"], ["cap", "柱帽", "(V)"], ["hole", "板洞", "(N)"], ["rebar", "板受力筋", "(S)"], ["neg", "板负筋", "(F)"], ["strip", "楼层板带", "(H)"]]],
        ["基础", false, []],
        ["其它", false, []],
        ["自定义", true, [["point", "自定义点", ""]]],
      ];

      function renderChild([id, label, key], index, list) {
        const selected = label === "框柱" ? "bg-[#d9d9d9]" : "";
        const line = index === list.length - 1 ? "h-2" : "h-4";
        return `<li class="flex h-4">
          <span class="ml-3 w-[19px] border-l border-dotted border-[#808080]"></span>
          <span class="${line} w-[9px] border-l border-dotted border-[#808080]"><span class="mt-[7px] block border-t border-dotted border-[#808080]"></span></span>
          <span class="flex items-center gap-1 pr-1 pl-0.5 ${selected}">${icon(id)}<span>${label}<span class="font-['Liberation_Mono'] text-[10px]">${key}</span></span></span>
        </li>`;
      }

      document.getElementById("tree").innerHTML = groups.map(([label, open, children]) => `
        <li>
          <div class="flex h-4 items-center">
            <svg class="ml-1.5 h-4 w-3" fill="none" stroke="${open ? "#404040" : "#a0a0a0"}" stroke-width="1.600"><path d="${open ? "M2 6l4 4 4-4" : "M4 4l4 4-4 4"}" /></svg>
            <span class="w-[5px]"></span>${icon(open ? "fopen" : "fclosed")}<span class="ml-1">${label}</span>
          </div>
          <ul>${children.map(renderChild).join("")}</ul>
        </li>`).join("");
    </script>
  </body>
</html>
